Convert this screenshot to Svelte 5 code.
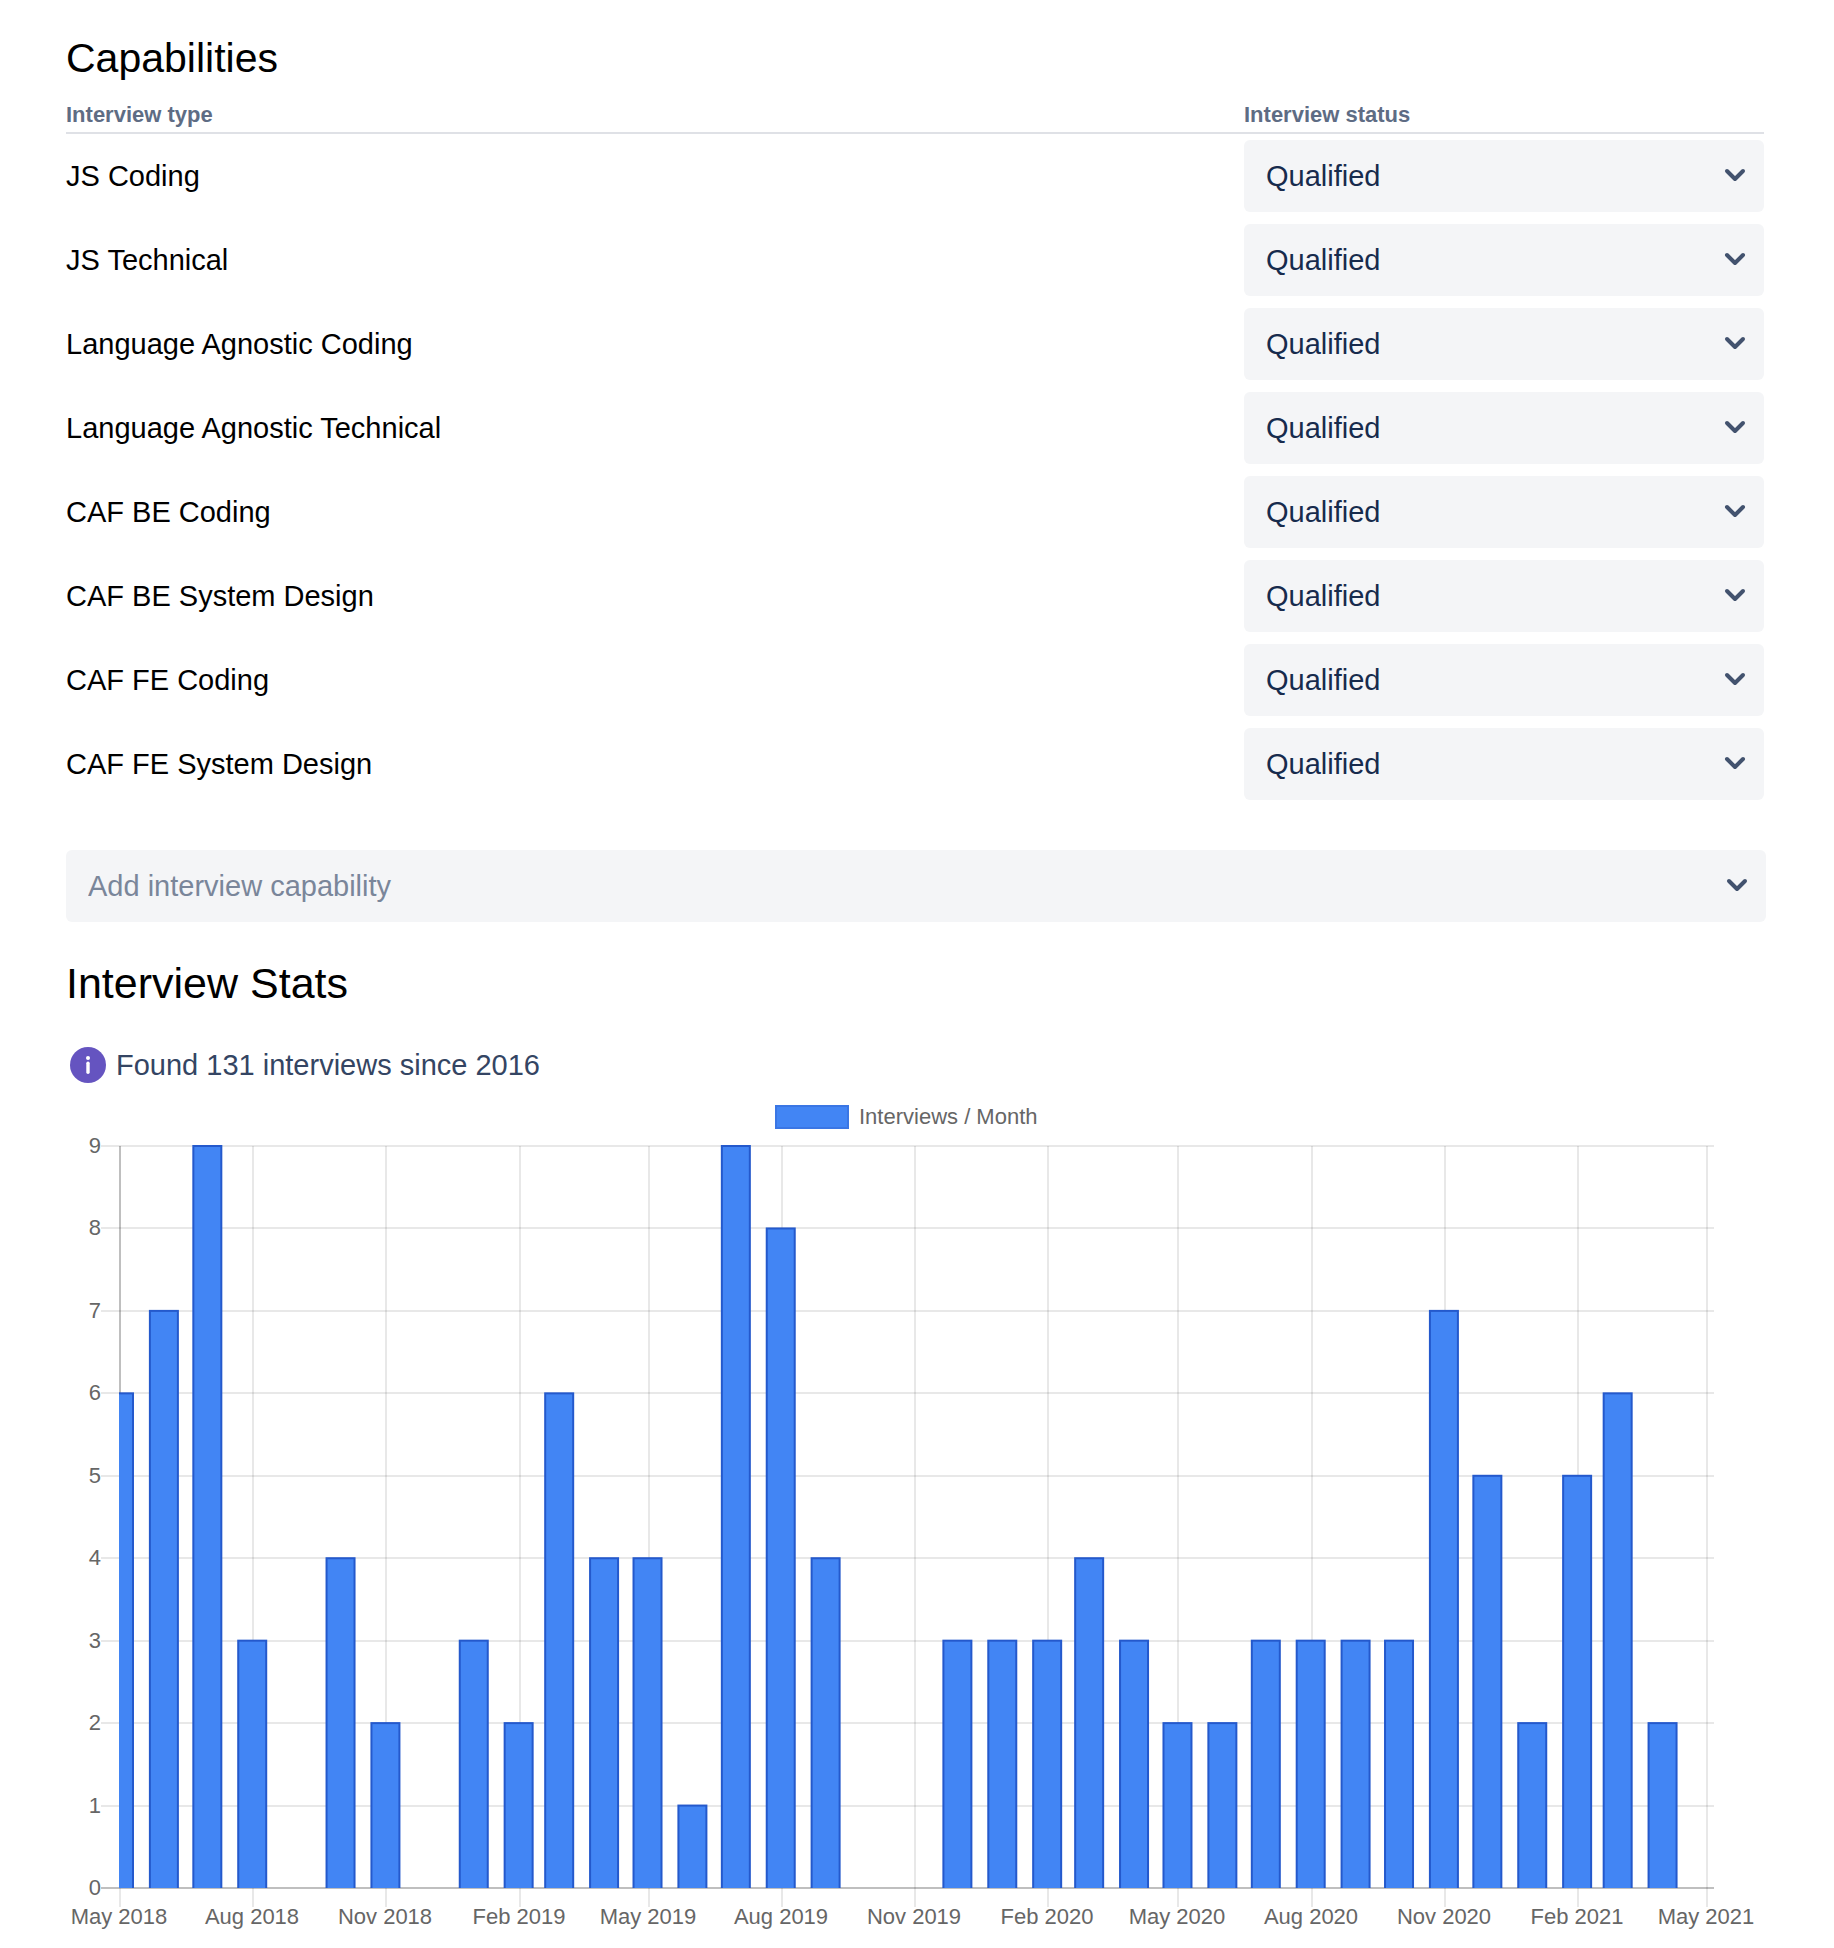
<script>
  const capabilities = [
    'JS Coding',
    'JS Technical',
    'Language Agnostic Coding',
    'Language Agnostic Technical',
    'CAF BE Coding',
    'CAF BE System Design',
    'CAF FE Coding',
    'CAF FE System Design',
  ];

  // Interviews per month, starting in May 2018
  const counts = [
    6, 7, 9, 3, 0, 4, 2, 0, 3, 2, 6, 4, 4, 1, 9, 8, 4, 0,
    0, 3, 3, 3, 4, 3, 2, 2, 3, 3, 3, 3, 7, 5, 2, 5, 6, 2,
  ];
  const total = counts.reduce((sum, n) => sum + n, 0);
  const monthNames = ['Jan', 'Feb', 'Mar', 'Apr', 'May', 'Jun', 'Jul', 'Aug', 'Sep', 'Oct', 'Nov', 'Dec'];

  // Plot area in chart units
  const plot = { left: 53, right: 1640, edge: 1648, top: 63, bottom: 805 };
  const maxCount = 9;
  const start = Date.UTC(2018, 4, 1);
  const end = Date.UTC(2021, 4, 1);
  const xAt = (i) => plot.left + ((Date.UTC(2018, 4 + i, 1) - start) / (end - start)) * (plot.right - plot.left);
  const yAt = (n) => plot.bottom - (n / maxCount) * (plot.bottom - plot.top);
  const label = (i) => `${monthNames[(4 + i) % 12]} ${2018 + Math.floor((4 + i) / 12)}`;

  const barWidth = 28;
  const bars = counts
    .map((n, i) => ({ n, x: xAt(i) - barWidth / 2, y: yAt(n), name: label(i) }))
    .filter((b) => b.n > 0);
  const xTicks = Array.from({ length: 13 }, (_, k) => ({ x: Math.round(xAt(k * 3)), text: label(k * 3) }));
  const yTicks = Array.from({ length: maxCount + 1 }, (_, n) => ({ n, y: Math.round(yAt(n)) }));
</script>

{#snippet chevron()}
  <svg class="chevron" viewBox="0 0 24 16" aria-hidden="true">
    <path d="M4 3l8 8 8-8" />
  </svg>
{/snippet}

<main>
  <h2>Capabilities</h2>
  <table>
    <thead>
      <tr>
        <th scope="col">Interview type</th>
        <th scope="col" class="status">Interview status</th>
      </tr>
    </thead>
    <tbody>
      {#each capabilities as name}
        <tr>
          <td>{name}</td>
          <td>
            <div class="field">
              <select aria-label={`${name} status`}>
                <option>Qualified</option>
              </select>
              {@render chevron()}
            </div>
          </td>
        </tr>
      {/each}
    </tbody>
  </table>

  <div class="field add">
    <select class="empty" aria-label="Add interview capability">
      <option>Add interview capability</option>
    </select>
    {@render chevron()}
  </div>

  <h2 class="stats">Interview Stats</h2>
  <p class="found">
    <svg class="info" viewBox="0 0 36 36" aria-hidden="true">
      <circle cx="18" cy="18" r="18" fill="#6554c0" />
      <circle cx="18" cy="11" r="2" fill="#fff" />
      <rect x="16.3" y="14.5" width="3.4" height="12.5" rx="1.7" fill="#fff" />
    </svg>
    Found {total} interviews since 2016
  </p>

  <svg class="chart" viewBox="0 0 1700 864" role="img" aria-label="Interviews per month">
    <defs>
      <clipPath id="plot-area">
        <rect x={plot.left} y={plot.top - 2} width={plot.edge - plot.left} height={plot.bottom - plot.top + 2} />
      </clipPath>
    </defs>
    <rect class="key" x="710" y="23" width="72" height="22" />
    <text x="793" y="41">Interviews / Month</text>

    {#each yTicks as t}
      <line class:axis={t.n === 0} x1="35" x2={plot.edge} y1={t.y} y2={t.y} />
      <text class="count" x="35" y={t.y + 7}>{t.n}</text>
    {/each}
    {#each xTicks as t, i}
      <line class:axis={i === 0} x1={t.x + 1} x2={t.x + 1} y1={plot.top} y2={plot.bottom} />
      <line x1={t.x + 1} x2={t.x + 1} y1={plot.bottom} y2={plot.bottom + 19} />
      <text class="month" x={t.x} y={plot.bottom + 36}>{t.text}</text>
    {/each}
    <g clip-path="url(#plot-area)">
      {#each bars as b}
        <rect class="bar" x={b.x} y={b.y} width={barWidth} height={plot.bottom - b.y + 4}>
          <title>{b.name}: {b.n}</title>
        </rect>
      {/each}
    </g>
  </svg>
</main>

<style>
  :global(body) {
    background: #fff;
  }
  main {
    padding: 34px 68px 0 66px;
    color: #000;
    font: 29px/36px "Liberation Sans", Arial, sans-serif;
  }
  h2 {
    margin: 0;
    font-size: 41px;
    line-height: 48px;
    font-weight: 400;
  }
  table {
    width: calc(100% - 2px);
    border-collapse: separate;
    border-spacing: 0;
    table-layout: fixed;
  }
  th {
    padding: 19px 0 3px;
    border-bottom: 2px solid #dfe1e6;
    color: #5e6c84;
    font-size: 22px;
    line-height: 28px;
    font-weight: 700;
    text-align: left;
  }
  .status {
    width: 520px;
  }
  td {
    padding: 6px 0;
    vertical-align: middle;
  }
  .field {
    display: grid;
    align-items: center;
  }
  select {
    grid-area: 1 / 1;
    width: 100%;
    height: 72px;
    margin: 0;
    padding: 0 64px 0 22px;
    border: 0;
    border-radius: 6px;
    appearance: none;
    background: #f4f5f7;
    color: #172b4d;
    font: inherit;
  }
  .empty {
    color: #7a869a;
  }
  .chevron {
    grid-area: 1 / 1;
    justify-self: end;
    width: 24px;
    height: 16px;
    margin-right: 17px;
    fill: none;
    stroke: #42526e;
    stroke-width: 4;
    stroke-linecap: round;
    stroke-linejoin: round;
    pointer-events: none;
  }
  .add {
    margin-top: 44px;
  }
  .stats {
    margin-top: 37px;
    font-size: 43px;
  }
  .found {
    display: flex;
    align-items: center;
    gap: 10px;
    margin: 40px 0 0;
    padding-left: 4px;
    color: #344563;
  }
  .info {
    width: 36px;
    height: 36px;
  }
  .chart {
    display: block;
    width: 100%;
    height: auto;
    font-size: 22px;
  }
  .chart text {
    fill: #666;
  }
  .chart .count {
    text-anchor: end;
  }
  .chart .month {
    text-anchor: middle;
  }
  .chart line {
    stroke: rgba(0, 0, 0, 0.09);
    stroke-width: 2;
  }
  .chart .axis {
    stroke: rgba(0, 0, 0, 0.25);
  }
  .key,
  .bar {
    fill: #4285f4;
    stroke: #2459cc;
    stroke-width: 2;
  }
  .key {
    stroke: #3a76e4;
  }
</style>
